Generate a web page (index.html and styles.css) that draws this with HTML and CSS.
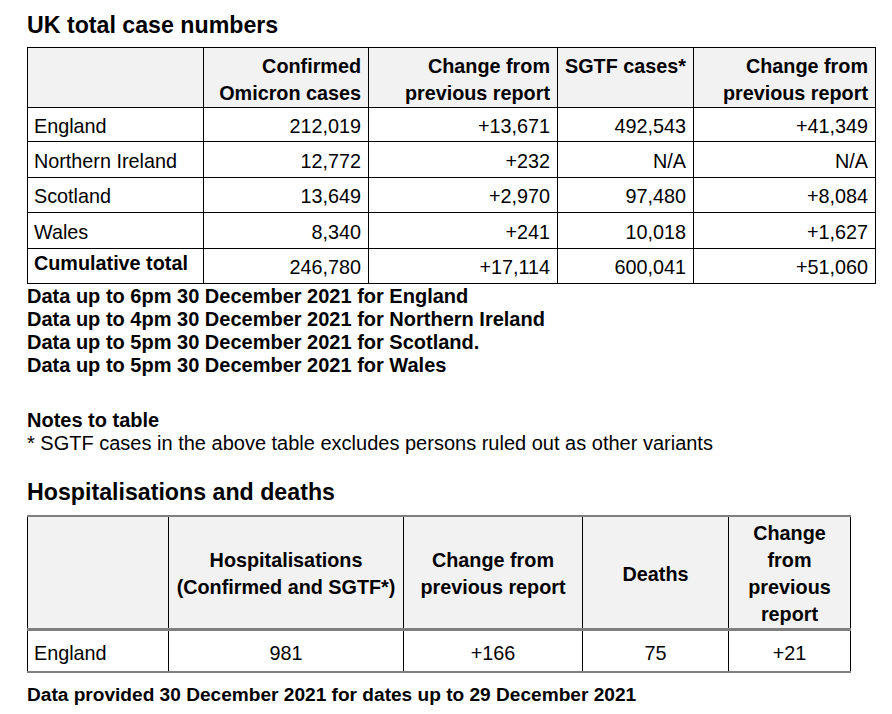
FILE: index.html
```html
<!DOCTYPE html>
<html lang="en">
<head>
<meta charset="utf-8">
<title>UK total case numbers</title>
<link rel="stylesheet" href="styles.css">
</head>
<body>
<main class="page">
  <h2 class="heading heading-first">UK total case numbers</h2>
  <table class="cases">
    <colgroup>
      <col class="c1"><col class="c2"><col class="c3"><col class="c4"><col class="c5">
    </colgroup>
    <thead>
      <tr>
        <th></th>
        <th class="r">Confirmed<br>Omicron cases</th>
        <th class="r">Change from<br>previous report</th>
        <th class="l">SGTF cases*</th>
        <th class="r">Change from<br>previous report</th>
      </tr>
    </thead>
    <tbody>
      <tr class="row-a"><td class="name">England</td><td>212,019</td><td>+13,671</td><td>492,543</td><td>+41,349</td></tr>
      <tr class="row-b"><td class="name">Northern Ireland</td><td>12,772</td><td>+232</td><td>N/A</td><td>N/A</td></tr>
      <tr class="row-c"><td class="name">Scotland</td><td>13,649</td><td>+2,970</td><td>97,480</td><td>+8,084</td></tr>
      <tr class="row-b"><td class="name">Wales</td><td>8,340</td><td>+241</td><td>10,018</td><td>+1,627</td></tr>
      <tr class="row-c total"><td class="name">Cumulative total</td><td>246,780</td><td>+17,114</td><td>600,041</td><td>+51,060</td></tr>
    </tbody>
  </table>
  <div class="dates">
    <p>Data up to 6pm 30 December 2021 for England</p>
    <p>Data up to 4pm 30 December 2021 for Northern Ireland</p>
    <p>Data up to 5pm 30 December 2021 for Scotland.</p>
    <p>Data up to 5pm 30 December 2021 for Wales</p>
  </div>
  <div class="notes">
    <p class="notes-title">Notes to table</p>
    <p>* SGTF cases in the above table excludes persons ruled out as other variants</p>
  </div>
  <h2 class="heading heading-second">Hospitalisations and deaths</h2>
  <table class="hosp">
    <colgroup>
      <col class="h1"><col class="h2"><col class="h3"><col class="h4"><col class="h5">
    </colgroup>
    <thead>
      <tr>
        <th></th>
        <th>Hospitalisations<br>(Confirmed and SGTF*)</th>
        <th>Change from<br>previous report</th>
        <th>Deaths</th>
        <th>Change<br>from<br>previous<br>report</th>
      </tr>
    </thead>
    <tbody>
      <tr><td class="name">England</td><td>981</td><td>+166</td><td>75</td><td>+21</td></tr>
    </tbody>
  </table>
  <p class="provided">Data provided 30 December 2021 for dates up to 29 December 2021</p>
</main>
</body>
</html>
```

FILE: styles.css
```css
html, body {
  margin: 0;
  padding: 0;
  background: #ffffff;
}

body {
  font-family: "Liberation Sans", Arial, sans-serif;
  color: #000000;
}

.page {
  padding: 0 0 0 27px;
}

p {
  margin: 0;
}

.heading {
  font-size: 23.2px;
  line-height: 26px;
  font-weight: bold;
  margin: 0;
}

.heading-first {
  padding-top: 12px;
  margin-bottom: 9px;
}

.heading-second {
  margin-top: 24px;
  margin-bottom: 10px;
}

/* Table 1 */
.cases {
  border-collapse: collapse;
  table-layout: fixed;
  width: 848px;
  font-size: 19.8px;
}

.cases .c1 { width: 176px; }
.cases .c2 { width: 165px; }
.cases .c3 { width: 189px; }
.cases .c4 { width: 136px; }
.cases .c5 { width: 182px; }

.cases th,
.cases td {
  border: 1px solid #000000;
  padding: 0 7px;
  white-space: nowrap;
}

.cases th {
  background: #f2f2f2;
  font-weight: bold;
  line-height: 27px;
  vertical-align: top;
  padding-top: 5px;
  padding-bottom: 0;
  height: 54px;
}

.cases th.r { text-align: right; }
.cases th.l { text-align: left; }

.cases td {
  text-align: right;
  line-height: 23px;
  vertical-align: middle;
  padding-top: 3px;
  padding-bottom: 0;
}

.cases td.name {
  text-align: left;
  padding-left: 6px;
}

.cases .row-a td { height: 30px; }
.cases .row-b td { height: 32px; }
.cases .row-c td { height: 31px; }

.cases .total td.name {
  font-weight: bold;
  vertical-align: top;
  padding-top: 3px;
}

/* Notes */
.dates {
  margin-top: 1px;
  font-size: 20px;
  line-height: 23px;
  font-weight: bold;
}

.notes {
  margin-top: 32px;
  font-size: 20px;
  line-height: 23px;
}

.notes-title {
  font-weight: bold;
}

/* Table 2 */
.hosp {
  border-collapse: collapse;
  table-layout: fixed;
  width: 823px;
  font-size: 19.8px;
}

.hosp .h1 { width: 141px; }
.hosp .h2 { width: 235px; }
.hosp .h3 { width: 179px; }
.hosp .h4 { width: 146px; }
.hosp .h5 { width: 122px; }

.hosp th,
.hosp td {
  border-left: 1px solid #000000;
  border-right: 1px solid #000000;
  text-align: center;
  padding: 0 4px;
  white-space: nowrap;
}

.hosp th {
  background: #f2f2f2;
  font-weight: bold;
  line-height: 27px;
  vertical-align: middle;
  border-top: 2px solid #7f7f7f;
  border-bottom: 3px solid #7f7f7f;
  padding-top: 3px;
  height: 108px;
}

.hosp td {
  line-height: 23px;
  height: 36px;
  padding-top: 4px;
  vertical-align: middle;
  border-bottom: 2px solid #7f7f7f;
}

.hosp td.name {
  text-align: left;
  padding-left: 6px;
}

.provided {
  margin-top: 10px;
  font-size: 19.1px;
  line-height: 23px;
  font-weight: bold;
}
```
